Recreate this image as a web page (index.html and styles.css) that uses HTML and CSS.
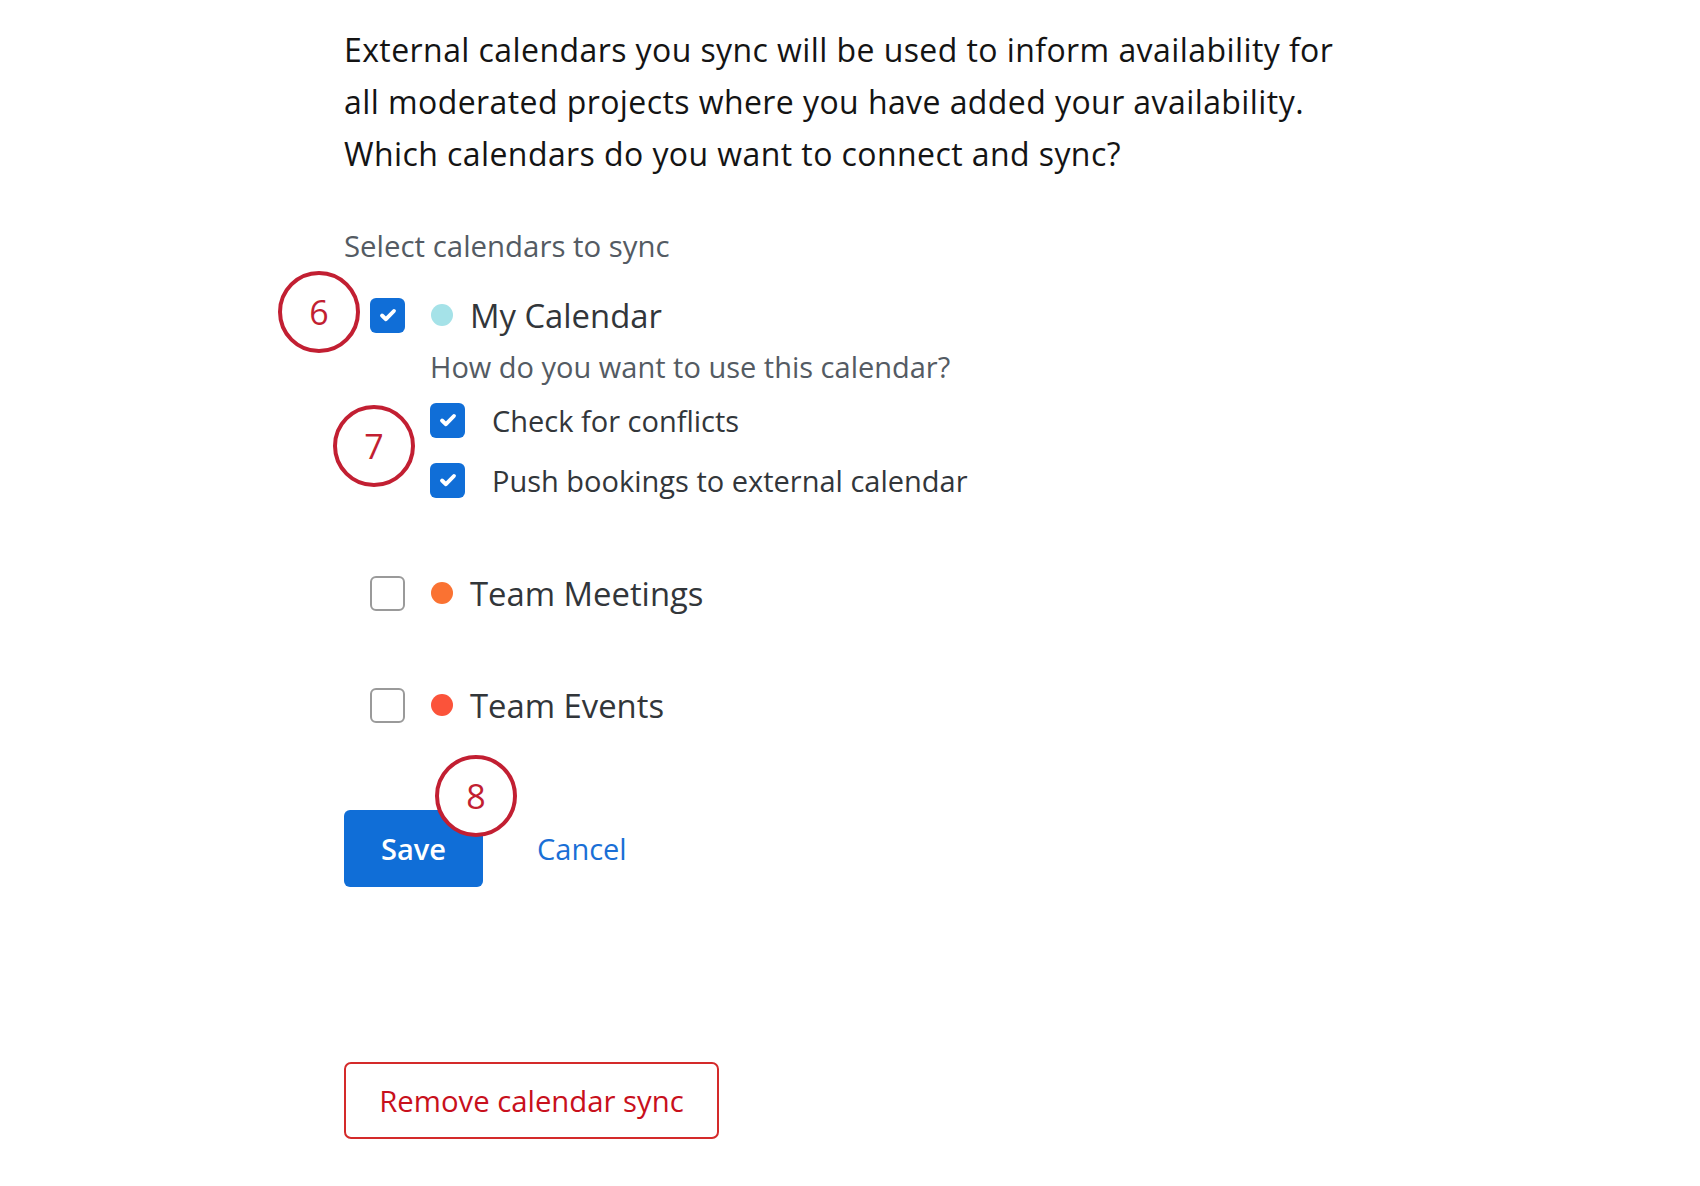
FILE: index.html
```html
<!DOCTYPE html>
<html lang="en">
<head>
<meta charset="utf-8">
<title>Calendar sync</title>
<link rel="stylesheet" href="styles.css">
</head>
<body>
<main class="page">
  <p class="intro">External calendars you sync will be used to inform availability for<br>all moderated projects where you have added your availability.<br>Which calendars do you want to connect and sync?</p>

  <div class="select-label">Select calendars to sync</div>

  <div class="cal-row row-first">
    <span class="annot annot-6">6</span>
    <span class="box checked"><svg viewBox="0 0 24 24"><path d="M6.5 12.5l3.6 3.4 7.4-7.6"/></svg></span>
    <span class="dot dot-teal"></span>
    <span class="cal-name">My Calendar</span>
  </div>

  <div class="sub">
    <div class="sub-q">How do you want to use this calendar?</div>
    <div class="opt opt-check">
      <span class="annot annot-7">7</span>
      <span class="box checked"><svg viewBox="0 0 24 24"><path d="M6.5 12.5l3.6 3.4 7.4-7.6"/></svg></span>
      <span class="opt-label">Check for conflicts</span>
    </div>
    <div class="opt opt-push">
      <span class="box checked"><svg viewBox="0 0 24 24"><path d="M6.5 12.5l3.6 3.4 7.4-7.6"/></svg></span>
      <span class="opt-label">Push bookings to external calendar</span>
    </div>
  </div>

  <div class="cal-row row-meet">
    <span class="box"></span>
    <span class="dot dot-orange"></span>
    <span class="cal-name">Team Meetings</span>
  </div>

  <div class="cal-row row-events">
    <span class="box"></span>
    <span class="dot dot-red"></span>
    <span class="cal-name">Team Events</span>
  </div>

  <div class="actions">
    <button class="btn-save">Save</button>
    <span class="annot annot-8">8</span>
    <a class="cancel" href="#">Cancel</a>
  </div>

  <button class="btn-remove">Remove calendar sync</button>
</main>
</body>
</html>
```

FILE: styles.css
```css
html, body {
  margin: 0;
  padding: 0;
  background: #ffffff;
}

.page {
  display: flex;
  flex-direction: column;
  align-items: flex-start;
  padding: 24px 0 0 344px;
  font-family: "Open Sans", "Noto Sans", sans-serif;
  color: #32363a;
}

.intro {
  margin: 0;
  font-family: "Open Sans", sans-serif;
  font-size: 32px;
  letter-spacing: 0.42px;
  line-height: 52px;
  color: #141414;
  white-space: nowrap;
}

.select-label {
  margin-top: 46px;
  font-size: 29.4px;
  line-height: 40px;
  color: #545b63;
}

.cal-row {
  position: relative;
  display: flex;
  align-items: center;
  height: 50px;
  padding-left: 26px;
}

.row-first { margin-top: 24px; }
.row-meet { margin-top: 66px; }
.row-events { margin-top: 62px; }

.box {
  box-sizing: border-box;
  width: 35px;
  height: 35px;
  border: 2px solid #9a9a9a;
  border-radius: 6px;
  background: #fff;
  display: flex;
  align-items: center;
  justify-content: center;
  flex: none;
}

.box.checked {
  border: none;
  background: #106ed7;
}

.box svg {
  width: 26px;
  height: 26px;
  fill: none;
  stroke: #ffffff;
  stroke-width: 3.6;
  stroke-linecap: round;
  stroke-linejoin: round;
}

.dot {
  width: 22px;
  height: 22px;
  border-radius: 50%;
  margin-left: 26px;
  flex: none;
}

.dot-teal { background: #a5e2e8; }
.dot-orange { background: #fa7232; }
.dot-red { background: #fb533a; }

.cal-name {
  margin-left: 17px;
  font-size: 32.8px;
  color: #32363a;
}

.sub {
  display: flex;
  flex-direction: column;
  padding-left: 86px;
}

.sub-q {
  margin-top: 7px;
  font-size: 29px;
  line-height: 40px;
  color: #545b63;
}

.opt {
  position: relative;
  display: flex;
  align-items: center;
  height: 44px;
}

.opt-check { margin-top: 11px; }
.opt-push { margin-top: 16px; }

.opt-label {
  margin-left: 27px;
  font-size: 29px;
  color: #32363a;
}

.annot {
  position: absolute;
  box-sizing: border-box;
  width: 82px;
  height: 82px;
  border: 4.5px solid #c21f32;
  border-radius: 50%;
  background: #ffffff;
  color: #c21f32;
  font-size: 34px;
  display: flex;
  align-items: center;
  justify-content: center;
  z-index: 2;
}

.annot-6 { left: -66px; top: -19px; }
.annot-7 { left: -97px; top: 7px; }

.actions {
  position: relative;
  display: flex;
  align-items: center;
  margin-top: 80px;
}

.annot-8 { left: 91px; top: -55px; }

.btn-save {
  width: 139px;
  height: 77px;
  border: none;
  border-radius: 6px;
  background: #106ed7;
  color: #ffffff;
  font-family: "Open Sans", sans-serif;
  font-size: 29px;
  font-weight: 600;
  padding: 0;
}

.cancel {
  margin-left: 54px;
  font-size: 29px;
  color: #1a6fd6;
  text-decoration: none;
}

.btn-remove {
  margin-top: 175px;
  width: 375px;
  height: 77px;
  box-sizing: border-box;
  border: 2px solid #d42a2a;
  border-radius: 7px;
  background: #ffffff;
  color: #c8101c;
  font-family: "Open Sans", sans-serif;
  font-size: 29.3px;
  padding: 0;
}
```
